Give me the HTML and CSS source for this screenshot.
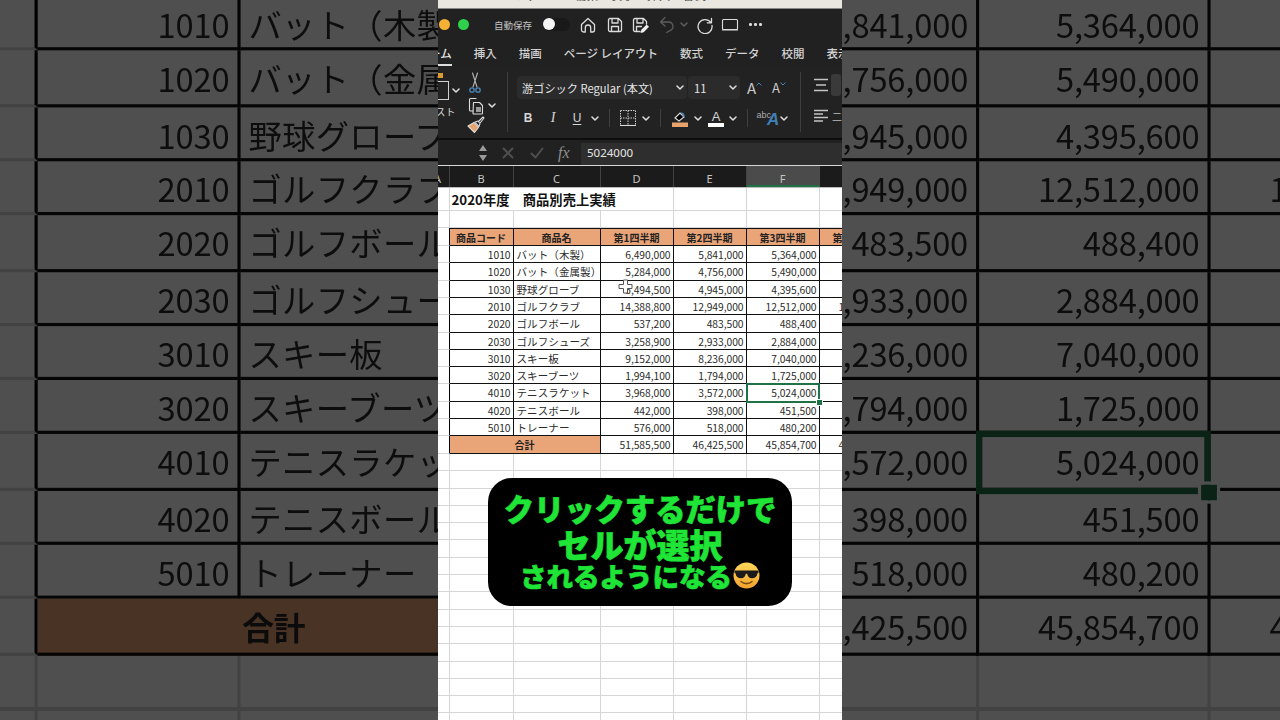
FILE: index.html
```html
<!DOCTYPE html>
<html lang="ja">
<head>
<meta charset="utf-8">
<title>2020年度 商品別売上実績</title>
<link rel="stylesheet" href="styles.css">
</head>
<body>
<div class="stage">
  <div class="backdrop">
    <div class="sheet">
      <div class="row row-title"><div class="c"></div><div class="c title">2020年度　商品別売上実績</div><div class="c"></div><div class="c"></div><div class="c"></div></div>
      <div class="row"><div class="c"></div><div class="c"></div><div class="c"></div><div class="c"></div><div class="c"></div><div class="c"></div><div class="c"></div></div>
      <div class="row row-head"><div class="c edge"></div><div class="c b th">商品コード</div><div class="c b th">商品名</div><div class="c b th">第1四半期</div><div class="c b th">第2四半期</div><div class="c b th">第3四半期</div><div class="c b th">第4四半期</div></div>
      <div class="row"><div class="c edge"></div><div class="c b n">1010</div><div class="c b t">バット（木製）</div><div class="c b n">6,490,000</div><div class="c b n">5,841,000</div><div class="c b n">5,364,000</div><div class="c b n">5,120,000</div></div>
      <div class="row"><div class="c edge"></div><div class="c b n">1020</div><div class="c b t">バット（金属製）</div><div class="c b n">5,284,000</div><div class="c b n">4,756,000</div><div class="c b n">5,490,000</div><div class="c b n">4,980,000</div></div>
      <div class="row"><div class="c edge"></div><div class="c b n">1030</div><div class="c b t">野球グローブ</div><div class="c b n">5,494,500</div><div class="c b n">4,945,000</div><div class="c b n">4,395,600</div><div class="c b n">4,210,000</div></div>
      <div class="row"><div class="c edge"></div><div class="c b n">2010</div><div class="c b t">ゴルフクラブ</div><div class="c b n">14,388,800</div><div class="c b n">12,949,000</div><div class="c b n">12,512,000</div><div class="c b n">11,900,000</div></div>
      <div class="row"><div class="c edge"></div><div class="c b n">2020</div><div class="c b t">ゴルフボール</div><div class="c b n">537,200</div><div class="c b n">483,500</div><div class="c b n">488,400</div><div class="c b n">470,000</div></div>
      <div class="row"><div class="c edge"></div><div class="c b n">2030</div><div class="c b t">ゴルフシューズ</div><div class="c b n">3,258,900</div><div class="c b n">2,933,000</div><div class="c b n">2,884,000</div><div class="c b n">2,700,000</div></div>
      <div class="row"><div class="c edge"></div><div class="c b n">3010</div><div class="c b t">スキー板</div><div class="c b n">9,152,000</div><div class="c b n">8,236,000</div><div class="c b n">7,040,000</div><div class="c b n">6,900,000</div></div>
      <div class="row"><div class="c edge"></div><div class="c b n">3020</div><div class="c b t">スキーブーツ</div><div class="c b n">1,994,100</div><div class="c b n">1,794,000</div><div class="c b n">1,725,000</div><div class="c b n">1,650,000</div></div>
      <div class="row"><div class="c edge"></div><div class="c b n">4010</div><div class="c b t">テニスラケット</div><div class="c b n">3,968,000</div><div class="c b n">3,572,000</div><div class="c b n sel">5,024,000</div><div class="c b n">3,300,000</div></div>
      <div class="row"><div class="c edge"></div><div class="c b n">4020</div><div class="c b t">テニスボール</div><div class="c b n">442,000</div><div class="c b n">398,000</div><div class="c b n">451,500</div><div class="c b n">420,000</div></div>
      <div class="row"><div class="c edge"></div><div class="c b n">5010</div><div class="c b t">トレーナー</div><div class="c b n">576,000</div><div class="c b n">518,000</div><div class="c b n">480,200</div><div class="c b n">460,000</div></div>
      <div class="row"><div class="c edge"></div><div class="c b th total">合計</div><div class="c b n">51,585,500</div><div class="c b n">46,425,500</div><div class="c b n">45,854,700</div><div class="c b n">43,110,000</div></div>
      <div class="grid-fill"></div>
    </div>
  </div>

  <div class="phone">
    <div class="menubar"><span class="menutext">Excel　ファイル　編集　表示　挿入　書式　ツール</span></div>

    <div class="titlebar">
      <span class="dot dot-orange"></span>
      <span class="dot dot-green"></span>
      <span class="autosave">自動保存</span>
      <span class="toggle"><span class="knob"></span></span>
      <svg class="ic ic-home" width="18" height="18" viewBox="0 0 18 18"><path d="M2.5 8.5 9 2.5l6.5 6v5.5a2 2 0 0 1-2 2h-1.8v-4.3a2.7 2.7 0 0 0-5.4 0V16H4.500a2 2 0 0 1-2-2z"/></svg>
      <svg class="ic ic-save" width="18" height="18" viewBox="0 0 18 18"><path d="M4 2.500h8.500L15.500 5.500V14a1.500 1.500 0 0 1-1.500 1.500H4A1.500 1.500 0 0 1 2.500 14V4A1.500 1.500 0 0 1 4 2.500zM6 2.500V7h6V2.500M5.500 15.500V10.500h7v5"/></svg>
      <svg class="ic ic-saveas" width="18" height="18" viewBox="0 0 18 18"><path d="M9 15.500H4A1.500 1.500 0 0 1 2.500 14V4A1.500 1.500 0 0 1 4 2.500h8.500L15.500 5.500V8M6 2.500V7h6V2.500M5.500 15.500V10.500h5"/><path class="fill-w" d="M9.500 17l.8-3.200 5.400-5.300 2.300 2.300-5.300 5.400z"/></svg>
      <svg class="ic ic-undo" width="18" height="18" viewBox="0 0 18 18"><path d="M7 1.500 2.500 6l4.500 4M2.500 6h8a4.500 4.500 0 0 1 1.500 8.700L8.500 16.500"/></svg>
      <svg class="chev chev-dim" width="8" height="5" viewBox="0 0 8 5"><path d="M1 1l3 3 3-3"/></svg>
      <svg class="ic ic-redo" width="18" height="18" viewBox="0 0 18 18"><path d="M14.800 6.500A7 7 0 1 0 16 9.500M15.500 2.500v4.300h-4.300"/></svg>
      <svg class="ic ic-view" width="18" height="14" viewBox="0 0 18 14"><path d="M2.500 1.500h13a1 1 0 0 1 1 1v8a1 1 0 0 1-1 1h-13a1 1 0 0 1-1-1v-8a1 1 0 0 1 1-1z"/><path d="M1.500 12h15"/></svg>
      <span class="more"><i></i><i></i><i></i></span>
    </div>

    <nav class="tabs">
      <span class="tab tab-active">ホーム</span>
      <span class="tab">挿入</span>
      <span class="tab">描画</span>
      <span class="tab">ページ レイアウト</span>
      <span class="tab">数式</span>
      <span class="tab">データ</span>
      <span class="tab">校閲</span>
      <span class="tab">表示</span>
    </nav>

    <section class="ribbon">
      <div class="clipboard">
        <div class="paste">
          <div class="paste-top">
            <span class="paste-board"></span>
            <svg class="chev" width="8" height="5" viewBox="0 0 8 5"><path d="M1 1l3 3 3-3"/></svg>
          </div>
          <span class="paste-label">ペースト</span>
        </div>
        <div class="clip-tools">
          <svg class="clip-ic" width="16" height="22" viewBox="0 0 16 22"><path class="s-gray" d="M5.500 1l4.500 14M10.500 1 6 15"/><circle class="s-blue" cx="5" cy="18" r="2.200"/><circle class="s-blue" cx="11" cy="18" r="2.200"/></svg>
          <div class="copy-row">
            <svg class="clip-ic" width="18" height="18" viewBox="0 0 18 18"><path class="s-white" d="M9 1.500H3.500a1 1 0 0 0-1 1V13a1 1 0 0 0 1 1H6"/><path class="s-white" d="M6.500 5.500h6l3 3v7.500a1 1 0 0 1-1 1h-8a1 1 0 0 1-.5-1z"/><path class="fill-g" d="M9 10h5v5H9z"/></svg>
            <svg class="chev" width="8" height="5" viewBox="0 0 8 5"><path d="M1 1l3 3 3-3"/></svg>
          </div>
          <svg class="clip-ic" width="18" height="18" viewBox="0 0 18 18"><path class="fill-o" d="M1 10l6-3.500 4.500 5-4 5z"/><path class="s-white" d="M1 10l6-3.500 4.500 5-4 5zM8 6l3-1 2 2.500-1 3zM12 5l4-4 1 1-3.500 4.500"/></svg>
        </div>
      </div>
      <span class="vsep"></span>
      <div class="font-group">
        <div class="font-row">
          <div class="select select-font"><span>游ゴシック Regular (本文)</span><svg class="chev" width="8" height="5" viewBox="0 0 8 5"><path d="M1 1l3 3 3-3"/></svg></div>
          <div class="select select-size"><span>11</span><svg class="chev" width="8" height="5" viewBox="0 0 8 5"><path d="M1 1l3 3 3-3"/></svg></div>
          <span class="grow-btn">A<svg width="6" height="4" viewBox="0 0 6 4"><path d="M.5 3.500 3 1l2.500 2.500"/></svg></span>
          <span class="grow-btn grow-small">A<svg width="6" height="4" viewBox="0 0 6 4"><path d="M.5.5 3 3 5.500.5"/></svg></span>
        </div>
        <div class="format-row">
          <span class="slot w24 fmt fmt-b">B</span>
          <span class="slot w26 fmt fmt-i">I</span>
          <span class="slot w22 fmt fmt-u">U</span>
          <span class="slot w14"><svg class="chev" width="8" height="5" viewBox="0 0 8 5"><path d="M1 1l3 3 3-3"/></svg></span>
          <span class="slot w14"><i class="rule"></i></span>
          <span class="slot w24"><svg width="16" height="16" viewBox="0 0 16 16"><path class="s-dash" d="M.500.500h15v15M.500.500v15M8 .500v15M.500 8h15"/><path class="s-white" d="M0 15.500h16"/></svg></span>
          <span class="slot w12"><svg class="chev" width="8" height="5" viewBox="0 0 8 5"><path d="M1 1l3 3 3-3"/></svg></span>
          <span class="slot w16"><i class="rule"></i></span>
          <span class="slot w24"><svg width="16" height="17" viewBox="0 0 16 17"><path class="s-white" d="M3 8l5-5 4 4-5 4z"/><path class="fill-b" d="M9 2l3 1.500 1 4-2-1z"/><path class="fill-o" d="M0 12.500h16V17H0z"/></svg></span>
          <span class="slot w12"><svg class="chev" width="8" height="5" viewBox="0 0 8 5"><path d="M1 1l3 3 3-3"/></svg></span>
          <span class="slot w24 color-a">A</span>
          <span class="slot w10"><svg class="chev" width="8" height="5" viewBox="0 0 8 5"><path d="M1 1l3 3 3-3"/></svg></span>
          <span class="slot w18"><i class="rule"></i></span>
          <span class="slot w24 abc"><small>abc</small><b>A</b></span>
          <span class="slot w8"><svg class="chev" width="8" height="5" viewBox="0 0 8 5"><path d="M1 1l3 3 3-3"/></svg></span>
        </div>
      </div>
      <span class="vsep"></span>
      <div class="align-group">
        <div class="align-row">
          <svg width="14" height="14" viewBox="0 0 14 14"><path d="M0 1.500h14M2 7h10M0 12.500h14"/></svg>
          <span class="align-box"></span>
        </div>
        <div class="align-row">
          <svg width="14" height="14" viewBox="0 0 14 14"><path d="M0 1.500h14M0 5h9M0 8.500h14M0 12h9"/></svg>
          <span class="align-mark">二</span>
        </div>
      </div>
    </section>

    <div class="fxbar">
      <span class="stepper"><i class="up"></i><i class="down"></i></span>
      <svg class="fx-ic fx-x" width="12" height="12" viewBox="0 0 12 12"><path d="M1.500 1.500l9 9M10.500 1.500l-9 9"/></svg>
      <svg class="fx-ic fx-ok" width="14" height="12" viewBox="0 0 14 12"><path d="M1.500 6.500l4 4 7-9"/></svg>
      <span class="fx-label">fx</span>
      <div class="fx-input">5024000</div>
    </div>

    <div class="colheads">
      <span class="ch ch-a">A</span><span class="ch ch-b">B</span><span class="ch ch-c">C</span><span class="ch ch-d">D</span><span class="ch ch-e">E</span><span class="ch ch-f">F</span><span class="ch ch-g"></span>
    </div>

    <div class="sheet">
      <div class="row row-title"><div class="c"></div><div class="c title">2020年度　商品別売上実績</div><div class="c"></div><div class="c"></div><div class="c"></div></div>
      <div class="row"><div class="c"></div><div class="c"></div><div class="c"></div><div class="c"></div><div class="c"></div><div class="c"></div><div class="c"></div></div>
      <div class="row row-head"><div class="c edge"></div><div class="c b th">商品コード</div><div class="c b th">商品名</div><div class="c b th">第1四半期</div><div class="c b th">第2四半期</div><div class="c b th">第3四半期</div><div class="c b th">第4四半期</div></div>
      <div class="row"><div class="c edge"></div><div class="c b n">1010</div><div class="c b t">バット（木製）</div><div class="c b n">6,490,000</div><div class="c b n">5,841,000</div><div class="c b n">5,364,000</div><div class="c b n">5,120,000</div></div>
      <div class="row"><div class="c edge"></div><div class="c b n">1020</div><div class="c b t">バット（金属製）</div><div class="c b n">5,284,000</div><div class="c b n">4,756,000</div><div class="c b n">5,490,000</div><div class="c b n">4,980,000</div></div>
      <div class="row"><div class="c edge"></div><div class="c b n">1030</div><div class="c b t">野球グローブ</div><div class="c b n">5,494,500</div><div class="c b n">4,945,000</div><div class="c b n">4,395,600</div><div class="c b n">4,210,000</div></div>
      <div class="row"><div class="c edge"></div><div class="c b n">2010</div><div class="c b t">ゴルフクラブ</div><div class="c b n">14,388,800</div><div class="c b n">12,949,000</div><div class="c b n">12,512,000</div><div class="c b n">11,900,000</div></div>
      <div class="row"><div class="c edge"></div><div class="c b n">2020</div><div class="c b t">ゴルフボール</div><div class="c b n">537,200</div><div class="c b n">483,500</div><div class="c b n">488,400</div><div class="c b n">470,000</div></div>
      <div class="row"><div class="c edge"></div><div class="c b n">2030</div><div class="c b t">ゴルフシューズ</div><div class="c b n">3,258,900</div><div class="c b n">2,933,000</div><div class="c b n">2,884,000</div><div class="c b n">2,700,000</div></div>
      <div class="row"><div class="c edge"></div><div class="c b n">3010</div><div class="c b t">スキー板</div><div class="c b n">9,152,000</div><div class="c b n">8,236,000</div><div class="c b n">7,040,000</div><div class="c b n">6,900,000</div></div>
      <div class="row"><div class="c edge"></div><div class="c b n">3020</div><div class="c b t">スキーブーツ</div><div class="c b n">1,994,100</div><div class="c b n">1,794,000</div><div class="c b n">1,725,000</div><div class="c b n">1,650,000</div></div>
      <div class="row"><div class="c edge"></div><div class="c b n">4010</div><div class="c b t">テニスラケット</div><div class="c b n">3,968,000</div><div class="c b n">3,572,000</div><div class="c b n sel">5,024,000</div><div class="c b n">3,300,000</div></div>
      <div class="row"><div class="c edge"></div><div class="c b n">4020</div><div class="c b t">テニスボール</div><div class="c b n">442,000</div><div class="c b n">398,000</div><div class="c b n">451,500</div><div class="c b n">420,000</div></div>
      <div class="row"><div class="c edge"></div><div class="c b n">5010</div><div class="c b t">トレーナー</div><div class="c b n">576,000</div><div class="c b n">518,000</div><div class="c b n">480,200</div><div class="c b n">460,000</div></div>
      <div class="row"><div class="c edge"></div><div class="c b th total">合計</div><div class="c b n">51,585,500</div><div class="c b n">46,425,500</div><div class="c b n">45,854,700</div><div class="c b n">43,110,000</div></div>
      <div class="grid-fill"></div>
      <svg class="cursor" width="15" height="15" viewBox="0 0 15 15"><path d="M5.500 1h4v4.500H14v4H9.500V14h-4V9.500H1v-4h4.500z"/></svg>
    </div>
  </div>

  <div class="caption">
    <div class="cap-l1">クリックするだけで</div>
    <div class="cap-l2">セルが選択</div>
    <div class="cap-l3">されるようになる<svg class="emoji" width="27" height="27" viewBox="0 0 27 27"><defs><linearGradient id="face" x1="0" y1="0" x2="0" y2="1"><stop offset="0" stop-color="#ffd95a"/><stop offset="1" stop-color="#f2a12e"/></linearGradient></defs><circle cx="13.500" cy="13.500" r="13" fill="url(#face)"/><path d="M1.500 8.500h24v2.500l-1 .3c-.4 3.500-2.500 5-5.500 5s-4.300-2-4.800-4.500h-1.400c-.5 2.500-1.800 4.500-4.800 4.500s-5.100-1.500-5.500-5l-1-.3z" fill="#1a1a1a"/><path d="M8 19.500c3 2.800 8 2.800 11 0" fill="none" stroke="#7a4a12" stroke-width="1.600" stroke-linecap="round"/></svg></div>
  </div>
</div>
</body>
</html>
```
FILE: styles.css
```css
* { box-sizing: border-box; }
html, body { margin: 0; padding: 0; }
body { font-family: "Noto Sans CJK JP", "Noto Sans", sans-serif; background: #4f4f4f; }

.stage {
  position: relative;
  width: 1280px;
  height: 720px;
  overflow: hidden;
  display: flex;
  justify-content: center;
  background: #fff;
}

/* blurred, darkened, enlarged copy of the sheet behind the video */
.backdrop {
  position: absolute;
  left: 438px;
  top: 188px;
  width: 404px;
  transform-origin: 202px 173px;
  transform: scale(3.17);
  filter: blur(.22px) brightness(.31);
}

.phone {
  position: relative;
  z-index: 1;
  width: 404px;
  height: 720px;
  overflow: hidden;
  background: #fff;
  display: flex;
  flex-direction: column;
}

/* top strip */
.menubar {
  flex: 0 0 9px;
  height: 9px;
  background: #e9e7e0;
  border-bottom: 1px solid #8a8a86;
  overflow: hidden;
  font-size: 11px;
  line-height: 11px;
  color: #444;
  white-space: nowrap;
}
.menutext { display: block; margin: -10px 0 0 34px; letter-spacing: 1px; }

/* title bar */
.titlebar {
  flex: 0 0 31px;
  display: flex;
  align-items: center;
  background: #212121;
  color: #e2e2e2;
}
.dot { width: 11px; height: 11px; border-radius: 50%; flex: none; }
.dot-orange { background: #f5b133; margin-left: 1px; }
.dot-green { background: #2fd14c; margin-left: 8px; }
.autosave { font-size: 9.500px; color: #c4c4c4; margin-left: 25px; width: 39px; white-space: nowrap; }
.toggle { width: 27px; height: 13px; margin-left: 10px; border-radius: 7px; background: #191919; flex: none; }
.knob { display: block; width: 12px; height: 12px; border-radius: 50%; background: #f4f4f4; }
.ic { flex: none; fill: none; stroke: #dcdcdc; stroke-width: 1.300; stroke-linejoin: round; stroke-linecap: round; }
.ic-home { margin-left: 9px; }
.ic-save { margin-left: 9px; }
.ic-saveas { margin-left: 7px; }
.fill-w { fill: #eee; stroke: none; }
.ic-undo { margin-left: 9px; stroke: #5c5c5c; }
.chev { flex: none; fill: none; stroke: #dedede; stroke-width: 1.500; stroke-linecap: round; stroke-linejoin: round; }
.chev-dim { stroke: #5c5c5c; margin-left: 4px; }
.ic-redo { margin-left: 8px; }
.ic-view { margin-left: 7px; stroke-width: 1.100; }
.more { display: flex; gap: 2.500px; margin-left: 10px; }
.more i { width: 2.500px; height: 2.500px; border-radius: 50%; background: #dcdcdc; }

/* tabs */
.tabs {
  flex: 0 0 28px;
  display: flex;
  gap: 22px;
  align-items: flex-start;
  background: #212121;
  font-size: 11.500px;
  font-weight: 500;
  color: #d2d2d2;
  white-space: nowrap;
  padding-top: 5px;
  margin-left: -20.500px;
}
.tab { height: 21px; line-height: 16px; flex: none; }
.tab-active { border-bottom: 2px solid #dcdcdc; color: #e6e6e6; }

/* ribbon */
.ribbon {
  flex: 0 0 70px;
  display: flex;
  background: #222;
  overflow: hidden;
}
.clipboard { flex: 0 0 69px; display: flex; }
.paste { flex: 0 0 28px; display: flex; flex-direction: column; }
.paste-top { display: flex; align-items: center; margin-top: 12px; height: 21px; gap: 3px; }
.paste-board { width: 11px; height: 19px; border: 1px solid #cfcfcf; border-left: none; flex: none; position: relative; }
.paste-board::before { content: ""; position: absolute; left: 0; top: -9px; width: 5px; height: 5px; background: #d99b2e; }
.paste-label { font-size: 10px; color: #d8d8d8; margin: 3px 0 0 -22px; white-space: nowrap; }
.clip-tools { display: flex; flex-direction: column; align-items: flex-start; margin-left: 0; padding-left: 1px; padding-top: 4px; }
.copy-row { display: flex; align-items: center; gap: 3px; height: 19px; margin: 2px 0 1px; }
.clip-ic { flex: none; fill: none; stroke-linecap: round; stroke-linejoin: round; }
.s-gray { stroke: #b5b5b5; stroke-width: 1.100; }
.s-blue { stroke: #4c86b8; stroke-width: 1.300; }
.s-white { stroke: #dcdcdc; stroke-width: 1.100; }
.fill-g { fill: #9a9a9a; }
.fill-o { fill: #e8a26c; }
.fill-b { fill: #4c86b8; }
.vsep { flex: 0 0 1px; margin: 4px 0 6px; background: #3d3d3d; }

.font-group { flex: 0 0 292px; padding-left: 8px; display: flex; flex-direction: column; }
.font-row { display: flex; align-items: center; margin-top: 8px; height: 23px; margin-left: 1px; }
.select {
  height: 23px;
  display: flex;
  align-items: center;
  justify-content: space-between;
  background: #2b2b2b;
  border-radius: 4px;
  color: #e4e4e4;
  font-size: 11.200px;
  padding: 0 3px 0 5px;
  white-space: nowrap;
}
.select-font { width: 170px; }
.select-size { width: 52px; margin-left: 1px; padding-left: 6px; }
.grow-btn { display: flex; font-size: 15px; color: #c9c9c9; margin-left: 7px; width: 20px; line-height: 18px; }
.grow-btn svg { fill: none; stroke: #4c86b8; stroke-width: 1; margin-top: 3px; }
.grow-small { font-size: 13px; margin-left: 5px; }

.format-row { display: flex; align-items: center; height: 22px; margin-top: 8px; }
.slot { display: flex; align-items: center; justify-content: center; flex: none; height: 22px; }
.slot svg { flex: none; }
.w8 { width: 8px; } .w10 { width: 10px; } .w12 { width: 12px; } .w14 { width: 14px; } .w16 { width: 16px; } .w18 { width: 18px; }
.w22 { width: 22px; } .w24 { width: 24px; } .w26 { width: 26px; }
.rule { display: block; width: 1px; height: 18px; background: #3f3f3f; }
.fmt { font-size: 12px; color: #d6d6d6; font-family: "Liberation Sans", sans-serif; }
.fmt-b { font-weight: 700; }
.fmt-i { font-family: "Liberation Serif", serif; font-style: italic; font-size: 14px; }
.fmt-u { text-decoration: underline; text-underline-offset: 2px; }
.s-dash { fill: none; stroke: #c8c8c8; stroke-width: 1; stroke-dasharray: 1.500 1; }
.color-a {
  font-size: 13px;
  color: #d2d2d2;
  font-family: "Liberation Sans", sans-serif;
  position: relative;
  padding-bottom: 4px;
}
.color-a::after { content: ""; position: absolute; left: 4px; right: 4px; bottom: 2px; height: 4px; background: #fff; }
.abc { gap: 0; color: #a9a9a9; font-family: "Liberation Sans", sans-serif; }
.abc small { font-size: 9px; margin-top: -7px; }
.abc b { font-size: 17px; font-weight: 700; font-style: italic; color: #3f7fb5; margin: 3px 0 0 -4px; }

.align-group { flex: 1; display: flex; flex-direction: column; padding-left: 13px; }
.align-row { display: flex; align-items: center; height: 22px; margin-top: 6px; }
.align-row:first-child { margin-top: 6px; }
.align-row + .align-row { margin-top: 9px; }
.align-row svg { flex: none; fill: none; stroke: #c4c4c4; stroke-width: 1.300; }
.align-box { width: 10px; height: 22px; margin-left: 3px; background: #3a3a3a; border-radius: 3px; flex: none; }
.align-mark { font-size: 10px; color: #bbb; margin-left: 4px; }

/* formula bar */
.fxbar {
  flex: 0 0 28px;
  display: flex;
  align-items: center;
  background: #212121;
  border-top: 2px solid #0e0e0e;
  border-bottom: 1px solid #d8d8d8;
  position: relative;
}
.stepper { display: flex; flex-direction: column; gap: 4px; margin-left: 41px; width: 9px; flex: none; }
.stepper i { display: block; width: 0; height: 0; border-left: 4px solid transparent; border-right: 4px solid transparent; }
.stepper .up { border-bottom: 6px solid #9a9a9a; }
.stepper .down { border-top: 6px solid #9a9a9a; }
.fx-ic { flex: none; fill: none; stroke: #4f4f4f; stroke-width: 2; stroke-linecap: round; stroke-linejoin: round; }
.fx-x { margin-left: 14px; }
.fx-ok { margin-left: 16px; }
.fx-label { font-family: "Liberation Serif", serif; font-style: italic; font-size: 16px; color: #8f8f8f; margin-left: 14px; width: 23px; flex: none; }
.fx-input {
  flex: 1;
  height: 22px;
  align-self: flex-end;
  padding-left: 6px;
  background: #2e2e2e;
  color: #e6e6e6;
  font-size: 11.500px;
  line-height: 20px;
  font-family: "Noto Sans", sans-serif;
}

/* column header */
.colheads {
  flex: 0 0 22px;
  display: grid;
  grid-template-columns: 11.500px 64px 87px 73px 73px 73px 23px;
  background: #1b1b1b;
  color: #c4c4c4;
  font-size: 11px;
  line-height: 25px;
  text-align: center;
  font-family: "Noto Sans", sans-serif;
  border-bottom: 1px solid #bbb;
}
.ch { border-right: 1px solid #424242; overflow: hidden; height: 21px; }
.ch-a { text-align: left; text-indent: -4px; }
.ch-f { background: #4b4b4b; border-bottom: 2px solid #1f7246; border-right-color: #4b4b4b; }
.ch-g { border-right: none; }

/* sheet */
.sheet { position: relative; width: 404px; flex: 1; background: #fff; overflow: hidden; color: #2b2b2b; }
.backdrop .sheet { height: 540px; }
.row {
  display: grid;
  grid-template-columns: 11.500px 64px 87px 73px 73px 73px 73px;
  grid-template-rows: 100%;
  height: 17.300px;
  font-size: 10.500px;
  line-height: 18px;
}
.row-title { height: 22.800px; grid-template-columns: 11.500px 224px 73px 73px 73px; }
.c { border-right: 1px solid #d6d6d6; border-bottom: 1px solid #d6d6d6; white-space: nowrap; min-width: 0; }
.title { font-size: 13.300px; font-weight: 700; line-height: 24px; color: #111; padding-left: 2px; }
.edge { border-right-color: #000; }
.b { border-right-color: #111; border-bottom-color: #111; }
.row-head .b { border-top: 1px solid #111; }
.row-head { height: 18px; }
.th { background: #e9a477; text-align: center; font-weight: 700; font-size: 10px; color: #222; line-height: 17px; }
.total { grid-column: span 2; line-height: 17px; }
.n { text-align: right; padding-right: 2px; letter-spacing: -.05px; font-size: 10.300px; }
.t { padding-left: 3px; letter-spacing: .1px; }

.sel { position: relative; z-index: 2; }
.sel::before {
  content: "";
  position: absolute;
  inset: -1px -1px -2px -1px;
  border: 2px solid #1f7246;
}
.sel::after {
  content: "";
  position: absolute;
  right: -3px;
  bottom: -4px;
  width: 5px;
  height: 5px;
  background: #1f7246;
  outline: 1px solid #fff;
}

.grid-fill {
  height: 290px;
  background:
    linear-gradient(#d6d6d6, #d6d6d6) 10.500px 0 / 1px 100% no-repeat,
    linear-gradient(#d6d6d6, #d6d6d6) 74.500px 0 / 1px 100% no-repeat,
    linear-gradient(#d6d6d6, #d6d6d6) 161.500px 0 / 1px 100% no-repeat,
    linear-gradient(#d6d6d6, #d6d6d6) 234.500px 0 / 1px 100% no-repeat,
    linear-gradient(#d6d6d6, #d6d6d6) 307.500px 0 / 1px 100% no-repeat,
    linear-gradient(#d6d6d6, #d6d6d6) 380.500px 0 / 1px 100% no-repeat,
    repeating-linear-gradient(to bottom, transparent 0 16.300px, #d6d6d6 16.300px 17.300px);
}

.cursor { position: absolute; left: 180px; top: 91px; fill: #fff; stroke: #555; stroke-width: 1; z-index: 3; }

/* caption */
.caption {
  position: absolute;
  z-index: 2;
  left: 488px;
  top: 478px;
  width: 304px;
  height: 128px;
  border-radius: 24px;
  background: #000;
  color: #1fe636;
  font-weight: 900;
  text-align: center;
  white-space: nowrap;
  -webkit-text-stroke: .6px #1fe636;
  padding-top: 11px;
}
.cap-l1 { font-size: 30.300px; line-height: 39px; }
.cap-l2 { font-size: 33px; line-height: 33px; }
.cap-l3 { font-size: 26.500px; line-height: 33px; display: flex; justify-content: center; align-items: center; margin-top: -2px; }
.emoji { flex: none; -webkit-text-stroke: 0; margin-left: 1px; }
```
